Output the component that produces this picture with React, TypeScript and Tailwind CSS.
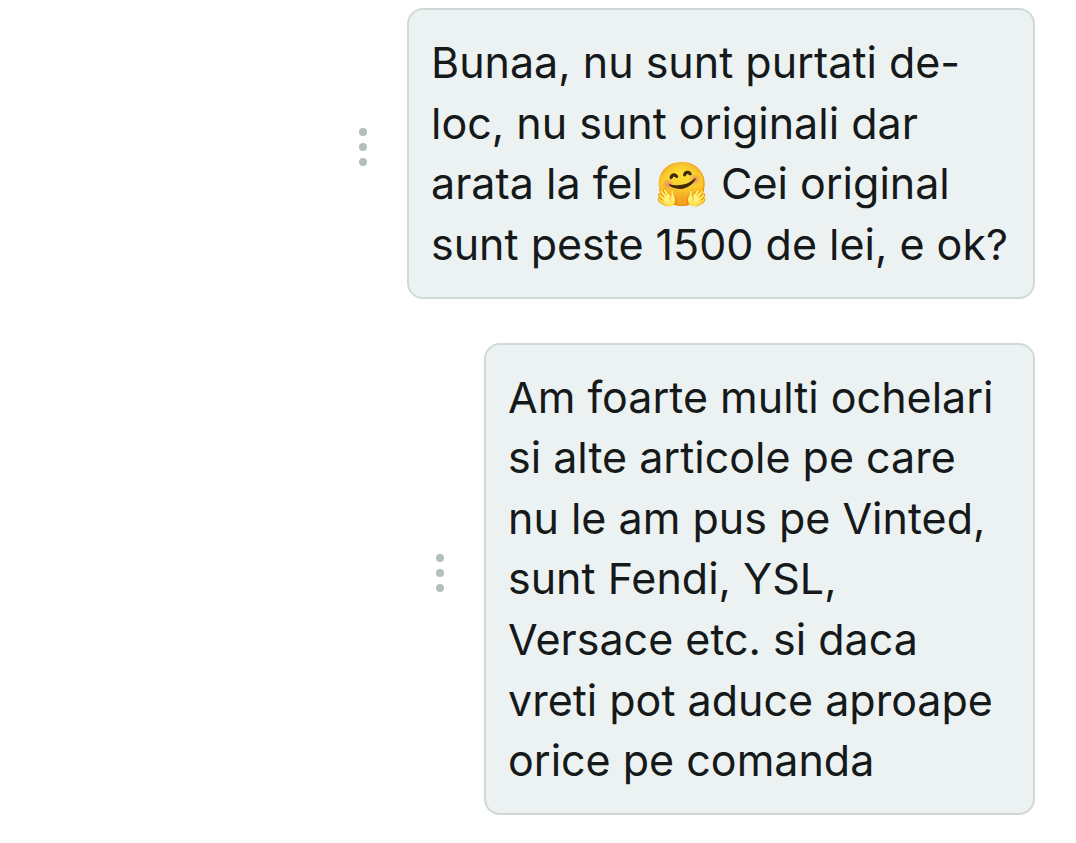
type MessageProps = { lines: string[]; width: string };

function Message({ lines, width }: MessageProps) {
  return (
    <article className="flex items-center justify-end gap-9">
      <button type="button" aria-label="Message options" className="mb-3 flex w-4 flex-col items-center gap-[7px] py-2">
        <span className="size-2 rounded-full bg-[#b3bfbf]" />
        <span className="size-2 rounded-full bg-[#b3bfbf]" />
        <span className="size-2 rounded-full bg-[#b3bfbf]" />
      </button>
      <p className={`rounded-2xl border-2 border-[#d1d8d8] bg-[#ecf2f2] p-[22px] text-[43px] leading-[1.41] text-[#15191a] ${width}`}>
        {lines.map((line) => (
          <span key={line} className="block whitespace-nowrap">{line}</span>
        ))}
      </p>
    </article>
  );
}

export default function App() {
  return (
    <main className="flex min-h-screen flex-col gap-11 bg-white pt-2 pr-[41px] font-['Inter',sans-serif]">
      <Message
        width="min-w-[628px]"
        lines={["Bunaa, nu sunt purtati de-", "loc, nu sunt originali dar", "arata la fel 🤗 Cei original", "sunt peste 1500 de lei, e ok?"]}
      />
      <Message
        width="min-w-[551px]"
        lines={["Am foarte multi ochelari", "si alte articole pe care", "nu le am pus pe Vinted,", "sunt Fendi, YSL,", "Versace etc. si daca", "vreti pot aduce aproape", "orice pe comanda"]}
      />
    </main>
  );
}
